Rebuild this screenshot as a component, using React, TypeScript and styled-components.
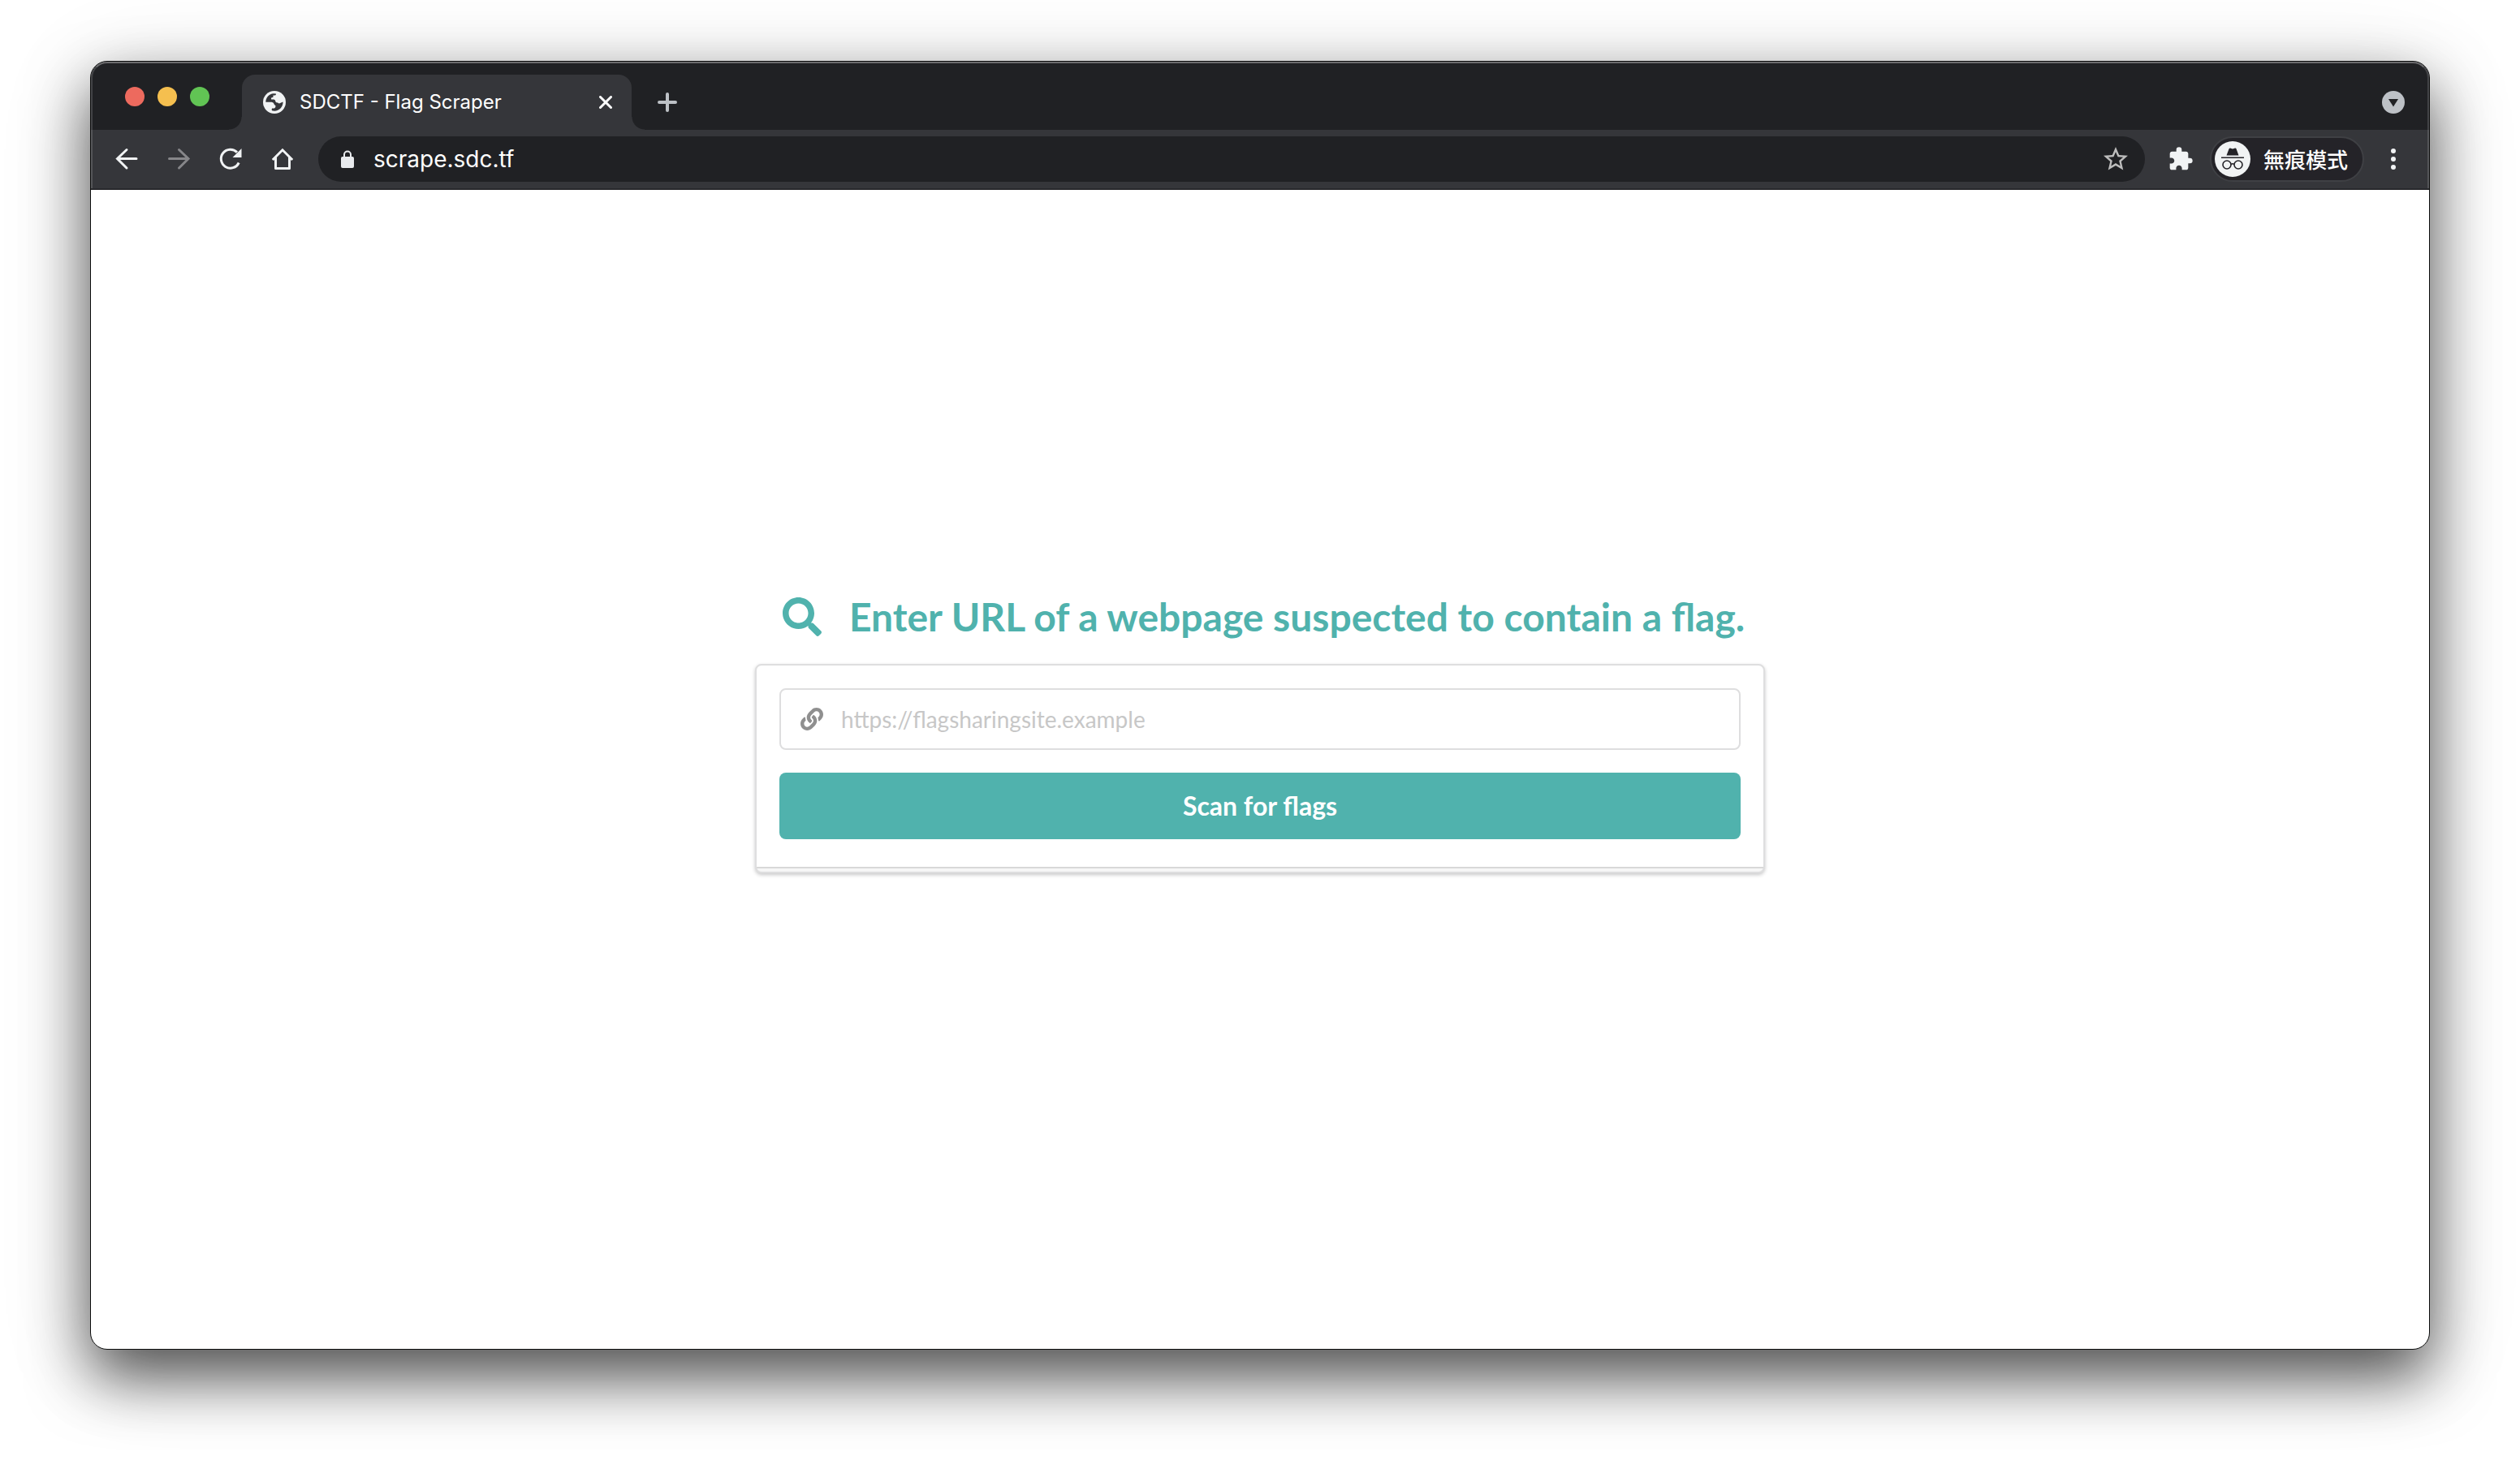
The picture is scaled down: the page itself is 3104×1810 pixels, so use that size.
import React from "react";
import styled, { createGlobalStyle } from "styled-components";
import { FaSearch, FaLink } from "react-icons/fa";
import { MdExtension, MdStarBorder } from "react-icons/md";

const uiFont = `Inter, Roboto, "Noto Sans CJK TC", sans-serif`;
const pageFont = `Lato, "Liberation Sans", sans-serif`;
const teal = "#50b2ad";

const GlobalStyle = createGlobalStyle`
  *, *::before, *::after { box-sizing: border-box; }
  html, body, #root { height: 100%; }
  body { margin: 0; background: #fff; overflow: hidden; }
  button, input { font: inherit; margin: 0; }
`;

const Desktop = styled.div`
  height: 100vh;
  padding: 75px 111px 147px;
  display: flex;
`;

const BrowserWindow = styled.div`
  flex: 1;
  min-width: 0;
  display: flex;
  flex-direction: column;
  border: 1px solid #0b0c0c;
  border-radius: 21px;
  overflow: hidden;
  background: #fff;
  box-shadow: 0 34px 76px rgba(0, 0, 0, 0.66), 0 16px 120px rgba(0, 0, 0, 0.12);
`;

const Chrome = styled.header`
  position: relative;
  flex: none;
  background: #35363a;
  border-bottom: 2px solid #28292c;
  font-family: ${uiFont};
  color: #fff;

  &::after {
    content: "";
    position: absolute;
    inset: 0;
    border: 2px solid rgba(255, 255, 255, 0.16);
    border-top-color: rgba(255, 255, 255, 0.34);
    border-bottom: 0;
    border-radius: 20px 20px 0 0;
    pointer-events: none;
  }
`;

const TabStrip = styled.div`
  height: 84px;
  display: flex;
  align-items: flex-end;
  padding: 0 30px 0 42px;
  background: #202124;
`;

const Lights = styled.div`
  display: flex;
  gap: 16px;
  height: 82px;
  align-items: center;
  margin-right: 40px;
`;

const Light = styled.button<{ $color: string }>`
  width: 24px;
  height: 24px;
  padding: 0;
  border: 0;
  border-radius: 50%;
  background: ${(p) => p.$color};
`;

const Tab = styled.div`
  position: relative;
  width: 480px;
  height: 68px;
  padding: 0 22px 0 26px;
  display: flex;
  align-items: center;
  gap: 17px;
  background: #35363a;
  border-radius: 16px 16px 0 0;
  font-size: 24px;
  line-height: 32px;

  &::before,
  &::after {
    content: "";
    position: absolute;
    bottom: 0;
    width: 16px;
    height: 16px;
  }
  &::before {
    right: 100%;
    background: radial-gradient(circle at 0 0, #202124 15px, #35363a 16px);
  }
  &::after {
    left: 100%;
    background: radial-gradient(circle at 100% 0, #202124 15px, #35363a 16px);
  }
`;

const TabTitle = styled.span`
  flex: 1;
  white-space: nowrap;
`;

const IconButton = styled.button<{ $size: number; $color?: string }>`
  flex: none;
  display: flex;
  align-items: center;
  justify-content: center;
  width: ${(p) => p.$size}px;
  height: ${(p) => p.$size}px;
  padding: 0;
  border: 0;
  background: none;
  color: ${(p) => p.$color ?? "#f1f3f4"};
`;

const StripActions = styled.div`
  flex: 1;
  height: 68px;
  display: flex;
  align-items: center;
  justify-content: space-between;
  padding-left: 28px;
`;

const Toolbar = styled.div`
  height: 72px;
  display: flex;
  align-items: center;
  padding: 0 28px;
`;

const NavButtons = styled.nav`
  display: flex;
  gap: 32px;
  margin-right: 28px;
`;

const Omnibox = styled.div`
  flex: 1;
  height: 56px;
  display: flex;
  align-items: center;
  gap: 16px;
  padding: 0 18px 0 20px;
  border-radius: 28px;
  background: #202124;
  font-size: 28px;
`;

const Address = styled.input`
  flex: 1;
  min-width: 0;
  padding: 0;
  border: 0;
  outline: 0;
  background: none;
  color: #fff;
`;

const ToolbarActions = styled.div`
  display: flex;
  align-items: center;
  margin-left: 28px;
  gap: 20px;
`;

const Profile = styled.button`
  height: 56px;
  display: flex;
  align-items: center;
  gap: 16px;
  padding: 0 18px 0 4px;
  border: 2px solid #3f4044;
  border-radius: 28px;
  background: #242328;
  color: #fff;
  font-family: "Noto Sans CJK TC", sans-serif;
  font-size: 26px;
  font-weight: 500;
  line-height: 32px;
`;

const Page = styled.main`
  flex: 1;
  display: flex;
  flex-direction: column;
  align-items: center;
  justify-content: center;
  padding-bottom: 90px;
  font-family: ${pageFont};
`;

const Scanner = styled.section`
  width: 1244px;
  max-width: 100%;
`;

const Heading = styled.h1`
  margin: 0 0 28px;
  padding: 0 0 0 34px;
  display: flex;
  align-items: center;
  gap: 34px;
  color: ${teal};
  font-size: 48px;
  line-height: 60px;
  font-weight: 700;
  white-space: nowrap;
`;

const Card = styled.form`
  display: flex;
  flex-direction: column;
  gap: 28px;
  padding: 28px 28px 40px;
  border: 2px solid #dededf;
  border-radius: 8px;
  background: linear-gradient(#d8d8d8 2px, #f6f6f6 2px) bottom / 100% 6px no-repeat #fff;
  box-shadow: 0 2px 4px rgba(34, 36, 38, 0.25);
`;

const Field = styled.label`
  display: flex;
  align-items: center;
  gap: 22px;
  height: 76px;
  padding: 0 24px;
  border: 2px solid #dededf;
  border-radius: 8px;
  color: #8f8f8f;
`;

const UrlInput = styled.input`
  flex: 1;
  min-width: 0;
  padding: 0;
  border: 0;
  outline: 0;
  background: none;
  font-size: 28px;
  line-height: 34px;
  color: #222;

  &::placeholder {
    color: #c7c7c7;
    opacity: 1;
  }
`;

const Submit = styled.button`
  height: 82px;
  border: 0;
  border-radius: 8px;
  background: ${teal};
  color: #fff;
  font-size: 32px;
  line-height: 32px;
  font-weight: 700;
`;

const GlobeIcon = () => (
  <svg width="28" height="28" viewBox="0 0 28 28" aria-hidden>
    <circle cx="14" cy="14" r="14" fill="#f1f3f4" />
    <path
      d="M3.300 13.700C3.500 8 7.500 3.600 13 3.300L16 3.400Q16.200 5.200 14.500 5.600H12.500V7.500Q12 8.200 10.500 8.200Q9.500 9.300 10.200 10.500H13.500Q15.300 10.800 15.500 13.500Q16 14.500 18 14.600Q19.200 15.800 20.500 15.200L24.600 13.500C24.600 20 20 24.600 14 24.700Q12.500 24.700 11 24.300Q10.300 23 11 21.500H13.800Q15.500 21 15.500 18.800Q15.500 17.500 14 17.300L13.500 16Q13 14 10.500 13.800Z"
      fill="#35363a"
    />
  </svg>
);

const LockIcon = () => (
  <svg width="32" height="32" viewBox="0 0 32 32" fill="none" aria-hidden>
    <rect x="8" y="13" width="16" height="14" rx="2" fill="#e8eaed" />
    <path d="M12 14v-3.500a4 4 0 0 1 8 0V14" stroke="#e8eaed" strokeWidth="2" />
  </svg>
);

const MenuIcon = () => (
  <svg width="32" height="32" viewBox="0 0 32 32" fill="currentColor" aria-hidden>
    <circle cx="16" cy="6" r="3" />
    <circle cx="16" cy="16" r="3" />
    <circle cx="16" cy="26" r="3" />
  </svg>
);

const CloseIcon = () => (
  <svg width="16" height="16" viewBox="0 0 16 16" stroke="currentColor" strokeWidth="3" strokeLinecap="round" aria-hidden>
    <path d="M1.500 1.500l13 13M14.500 1.500l-13 13" />
  </svg>
);

const PlusIcon = () => (
  <svg width="24" height="24" viewBox="0 0 24 24" stroke="currentColor" strokeWidth="4" strokeLinecap="round" aria-hidden>
    <path d="M12 2v20M2 12h20" />
  </svg>
);

const TabSearchIcon = () => (
  <svg width="28" height="28" viewBox="0 0 28 28" aria-hidden>
    <circle cx="14" cy="14" r="14" fill="#bdc1c6" />
    <path d="M8 10h12l-6 9.500z" fill="#202124" />
  </svg>
);

const ArrowIcon = ({ flip }: { flip?: boolean }) => (
  <svg width="32" height="32" viewBox="0 0 32 32" fill="none" stroke="currentColor" strokeWidth="3" strokeLinecap="round" aria-hidden>
    <path d={flip ? "M4.500 15.500H28M16.500 4.500L28 15.500L16.500 27" : "M28 15.500H4.500M16 4.500L4.500 15.500L16 27"} />
  </svg>
);

const ReloadIcon = () => (
  <svg width="32" height="32" viewBox="0 0 32 32" fill="none" aria-hidden>
    <path d="M26.200 20.500A11.500 11.500 0 1 1 24 7.600" stroke="currentColor" strokeWidth="3" />
    <path d="M29.500 3v11H18.500z" fill="currentColor" />
  </svg>
);

const HomeIcon = () => (
  <svg width="32" height="32" viewBox="0 0 32 32" fill="none" stroke="currentColor" strokeWidth="3" aria-hidden>
    <path d="M3.800 17L16 4.800L28.200 17" />
    <path d="M7.500 14v13.500h17V14" strokeLinejoin="round" />
  </svg>
);

const IncognitoIcon = () => (
  <svg width="44" height="44" viewBox="0 0 44 44" fill="none" aria-hidden>
    <circle cx="22" cy="22" r="22" fill="#f1f3f4" />
    <path d="M14.500 17.500L17.500 9.500Q18 8.500 19 8.600L22 9.600L25 8.600Q26.200 8.300 26.600 9.500L29.500 17.500z" fill="#242328" />
    <path d="M8 20.300h28" stroke="#242328" strokeWidth="1.600" />
    <g stroke="#242328" strokeWidth="1.600">
      <circle cx="15" cy="29" r="5" />
      <circle cx="29" cy="29" r="5" />
      <path d="M20 28.500q2-1.500 4 0" />
    </g>
  </svg>
);

export default function App() {
  return (
    <Desktop>
      <GlobalStyle />
      <BrowserWindow>
        <Chrome>
          <TabStrip>
            <Lights>
              <Light $color="#ed6a5e" aria-label="Close window" />
              <Light $color="#f5bf4f" aria-label="Minimise window" />
              <Light $color="#61c454" aria-label="Zoom window" />
            </Lights>
            <Tab>
              <GlobeIcon />
              <TabTitle>SDCTF - Flag Scraper</TabTitle>
              <IconButton $size={20} $color="#fff" aria-label="Close tab">
                <CloseIcon />
              </IconButton>
            </Tab>
            <StripActions>
              <IconButton $size={32} $color="#bdc1c6" aria-label="New tab">
                <PlusIcon />
              </IconButton>
              <IconButton $size={28} aria-label="Search tabs">
                <TabSearchIcon />
              </IconButton>
            </StripActions>
          </TabStrip>
          <Toolbar>
            <NavButtons>
              <IconButton $size={32} aria-label="Back">
                <ArrowIcon />
              </IconButton>
              <IconButton $size={32} $color="#868689" aria-label="Forward">
                <ArrowIcon flip />
              </IconButton>
              <IconButton $size={32} aria-label="Reload">
                <ReloadIcon />
              </IconButton>
              <IconButton $size={32} aria-label="Home">
                <HomeIcon />
              </IconButton>
            </NavButtons>
            <Omnibox>
              <LockIcon />
              <Address aria-label="Address" defaultValue="scrape.sdc.tf" />
              <IconButton $size={36} $color="#bdbdbd" aria-label="Bookmark">
                <MdStarBorder size={36} />
              </IconButton>
            </Omnibox>
            <ToolbarActions>
              <IconButton $size={32} aria-label="Extensions">
                <MdExtension size={32} />
              </IconButton>
              <Profile>
                <IncognitoIcon />
                無痕模式
              </Profile>
              <IconButton $size={32} aria-label="Menu">
                <MenuIcon />
              </IconButton>
            </ToolbarActions>
          </Toolbar>
        </Chrome>
        <Page>
          <Scanner>
            <Heading>
              <FaSearch size={48} />
              Enter URL of a webpage suspected to contain a flag.
            </Heading>
            <Card>
              <Field>
                <FaLink size={28} />
                <UrlInput type="url" aria-label="Webpage URL" placeholder="https://flagsharingsite.example" />
              </Field>
              <Submit type="button">Scan for flags</Submit>
            </Card>
          </Scanner>
        </Page>
      </BrowserWindow>
    </Desktop>
  );
}
